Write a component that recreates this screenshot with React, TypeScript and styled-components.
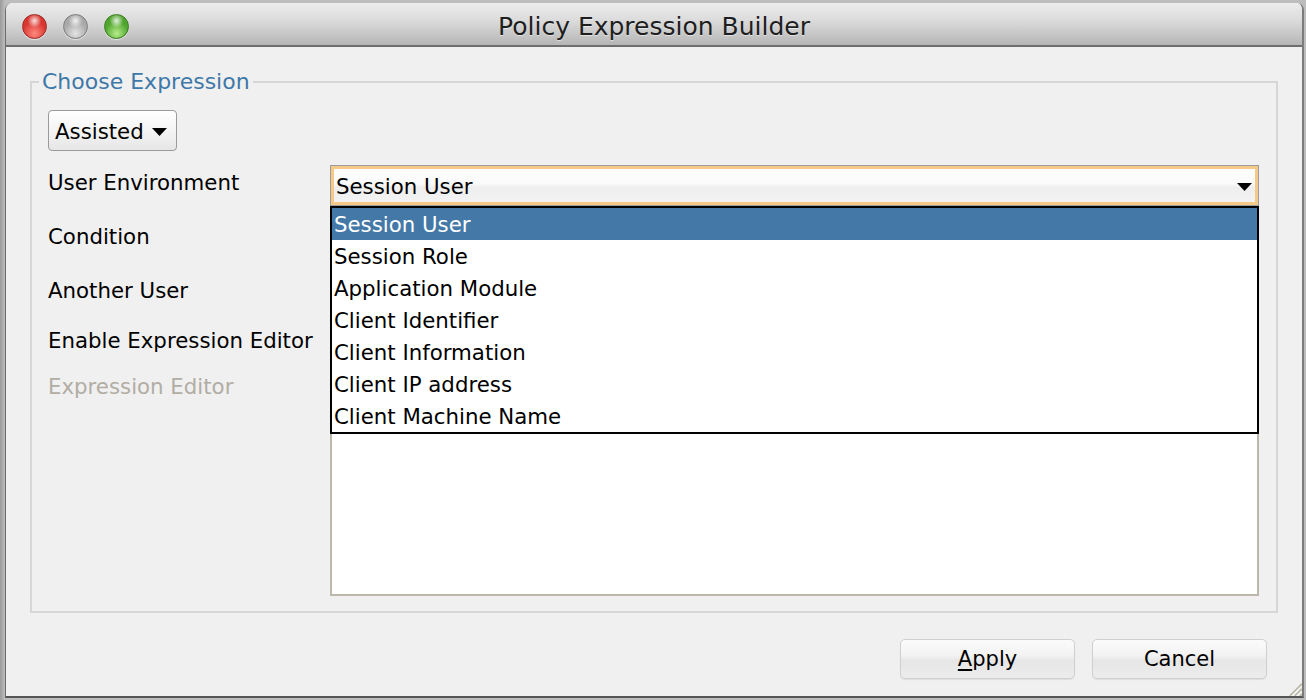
import React from "react";
import styled, { createGlobalStyle } from "styled-components";

const GlobalStyle = createGlobalStyle`
  html, body { margin: 0; padding: 0; }
  body { background: #6a6a6a; font-family: "DejaVu Sans", "Liberation Sans", sans-serif; }
  * { box-sizing: border-box; }
`;

const FONT = `"DejaVu Sans", "Liberation Sans", sans-serif`;

const Screen = styled.div`
  width: 1306px;
  height: 700px;
  overflow: hidden;
  background: linear-gradient(90deg, #9a9a9a 0px, #bdbdbd 5px, #bdbdbd 100%);
  padding: 3px 2px 0 5px;
  display: flex;
  flex-direction: column;
`;

const Window = styled.div`
  position: relative;
  width: 1299px;
  height: 695px;
  border-left: 1px solid #6c6c6c;
  border-right: 2px solid #7c7c7c;
  border-bottom: 2px solid #555;
  border-radius: 7px 7px 0 0;
  background: #f0f0f0;
  display: flex;
  flex-direction: column;
  overflow: hidden;
`;

const TitleBar = styled.div`
  height: 44px;
  flex: none;
  background: linear-gradient(180deg, #ececec 0%, #dcdcdc 40%, #b6b6b6 100%);
  border-bottom: 2px solid #6e6e6e;
  display: grid;
  grid-template-columns: 1fr auto 1fr;
  align-items: center;
  padding: 5px 16px 0 16px;
`;

const Lights = styled.div`
  display: flex;
  gap: 16px;
  align-items: center;
`;

const Light = styled.span<{ $c1: string; $c2: string; $rim: string }>`
  width: 25px;
  height: 25px;
  border-radius: 50%;
  border: 1px solid ${(p) => p.$rim};
  background:
    radial-gradient(circle at 50% 25%, rgba(255,255,255,0.85) 0px, rgba(255,255,255,0) 7px),
    radial-gradient(circle at 50% 80%, ${(p) => p.$c1} 0px, ${(p) => p.$c2} 12px);
  box-shadow: 0 1px 1px rgba(255,255,255,0.6);
`;

const Title = styled.div`
  font-family: ${FONT};
  font-size: 25px;
  color: #1e1e1e;
  text-shadow: 0 1px 0 rgba(255,255,255,0.5);
`;

const Content = styled.div`
  flex: 1;
  display: flex;
  flex-direction: column;
  padding: 0 24px;
`;

const Group = styled.fieldset`
  margin: 21px 0 0 0;
  padding: 0;
  border: 2px solid #d6d6d6;
  min-width: 0;
`;

const Legend = styled.legend`
  margin-left: 7px;
  padding: 0 3px;
  font-family: ${FONT};
  font-size: 22px;
  line-height: 28px;
  color: #3e78a8;
`;

const GroupBody = styled.div`
  padding: 14px 17px 15px 16px;
  display: flex;
  flex-direction: column;
  gap: 13px;
`;

const ModeButton = styled.div`
  width: 129px;
  height: 41px;
  margin-bottom: 1px;
  border: 1.5px solid #9a9a9a;
  border-radius: 4px;
  background: linear-gradient(180deg, #ffffff 0%, #f4f4f4 50%, #e6e6e6 100%);
  display: flex;
  align-items: center;
  gap: 8px;
  padding: 2px 0 0 6px;
  font-family: ${FONT};
  font-size: 21.3px;
  color: #000;
`;

const Row = styled.div<{ $h: number; $top?: boolean }>`
  display: flex;
  align-items: ${(p) => (p.$top ? "flex-start" : "center")};
  height: ${(p) => p.$h}px;
`;

const Label = styled.div<{ $disabled?: boolean; $pt?: number; $pb?: number }>`
  width: 282px;
  flex: none;
  font-family: ${FONT};
  font-size: 21.3px;
  line-height: 26px;
  padding-top: ${(p) => p.$pt ?? 0}px;
  padding-bottom: ${(p) => p.$pb ?? 0}px;
  color: ${(p) => (p.$disabled ? "#b1ada4" : "#000")};
`;

const ComboWrap = styled.div`
  position: relative;
  flex: 1;
  height: 41px;
`;

const Combo = styled.div<{ $focus?: boolean }>`
  height: 41px;
  border: 1px solid #9c9c9c;
  box-shadow: ${(p) => (p.$focus ? "inset 0 0 0 3px #f5ca88" : "none")};
  background: linear-gradient(180deg, #ffffff 0%, #fafafa 45%, #eeeeee 55%, #f4f4f4 100%);
  display: flex;
  align-items: center;
  justify-content: space-between;
  padding: 2px 6px 0 5px;
  font-family: ${FONT};
  font-size: 21.3px;
  color: #000;
`;

const Popup = styled.div`
  position: absolute;
  top: 100%;
  left: 0;
  right: 0;
  z-index: 5;
  background: #fff;
  border: 2px solid #000;
  display: flex;
  flex-direction: column;
`;

const Item = styled.div<{ $sel?: boolean }>`
  height: 32px;
  line-height: 30px;
  padding: 2px 0 0 2px;
  font-family: ${FONT};
  font-size: 21.3px;
  background: ${(p) => (p.$sel ? "#4479a7" : "#fff")};
  color: ${(p) => (p.$sel ? "#fff" : "#000")};
`;

const TextArea = styled.div`
  flex: 1;
  height: 230px;
  background: #fff;
  border: 2px solid #bcb9ac;
`;

const Footer = styled.div`
  display: flex;
  justify-content: flex-end;
  gap: 17px;
  padding: 26px 11px 0 0;
`;

const Button = styled.div`
  width: 175px;
  height: 40px;
  border: 1px solid #d0d0d0;
  border-radius: 5px;
  background: linear-gradient(180deg, #fbfbfb 0%, #f3f3f3 40%, #e6e6e6 55%, #ececec 100%);
  box-shadow: 0 1px 1px rgba(0,0,0,0.08);
  display: flex;
  align-items: center;
  justify-content: center;
  font-family: ${FONT};
  font-size: 21px;
  color: #000;
  u { text-underline-offset: 3px; }
`;

const Grip = styled.svg`
  position: absolute;
  right: 0;
  bottom: 0;
`;

const Arrow = () => (
  <svg width="15" height="8" viewBox="0 0 15 8">
    <path d="M0 0 H15 L7.5 8 Z" fill="#000" />
  </svg>
);

const items = [
  "Session User",
  "Session Role",
  "Application Module",
  "Client Identifier",
  "Client Information",
  "Client IP address",
  "Client Machine Name",
];

export default function App() {
  return (
    <>
      <GlobalStyle />
      <Screen>
        <Window>
          <TitleBar>
            <Lights>
              <Light $c1="#ff8a80" $c2="#d8362f" $rim="#9b2a25" />
              <Light $c1="#e4e4e4" $c2="#a9a9a9" $rim="#7d7d7d" />
              <Light $c1="#b6ec8a" $c2="#4fa52d" $rim="#3a7d22" />
            </Lights>
            <Title>Policy Expression Builder</Title>
            <span />
          </TitleBar>
          <Content>
            <Group>
              <Legend>Choose Expression</Legend>
              <GroupBody>
                <ModeButton>
                  Assisted <Arrow />
                </ModeButton>
                <Row $h={41}>
                  <Label $pb={5}>User Environment</Label>
                  <ComboWrap>
                    <Combo $focus>
                      <span>Session User</span>
                      <Arrow />
                    </Combo>
                    <Popup>
                      {items.map((it, i) => (
                        <Item key={it} $sel={i === 0}>
                          {it}
                        </Item>
                      ))}
                    </Popup>
                  </ComboWrap>
                </Row>
                <Row $h={41}>
                  <Label $pb={5}>Condition</Label>
                  <ComboWrap>
                    <Combo>
                      <span />
                      <Arrow />
                    </Combo>
                  </ComboWrap>
                </Row>
                <Row $h={41}>
                  <Label $pb={5}>Another User</Label>
                  <ComboWrap>
                    <Combo>
                      <span />
                      <Arrow />
                    </Combo>
                  </ComboWrap>
                </Row>
                <Row $h={26}>
                  <Label $pt={2}>Enable Expression Editor</Label>
                </Row>
                <Row $h={230} $top>
                  <Label $disabled $pt={8}>
                    Expression Editor
                  </Label>
                  <TextArea />
                </Row>
              </GroupBody>
            </Group>
            <Footer>
              <Button>
                <span>
                  <u>A</u>pply
                </span>
              </Button>
              <Button>Cancel</Button>
            </Footer>
          </Content>
          <Grip width="16" height="16" viewBox="0 0 16 16">
            <path d="M4 16 L16 4 M9 16 L16 9 M14 16 L16 14" stroke="#b9b6a6" strokeWidth="2" />
            <path d="M5.5 16 L16 5.5 M10.5 16 L16 10.5" stroke="#fff" strokeWidth="1" />
          </Grip>
        </Window>
      </Screen>
    </>
  );
}
